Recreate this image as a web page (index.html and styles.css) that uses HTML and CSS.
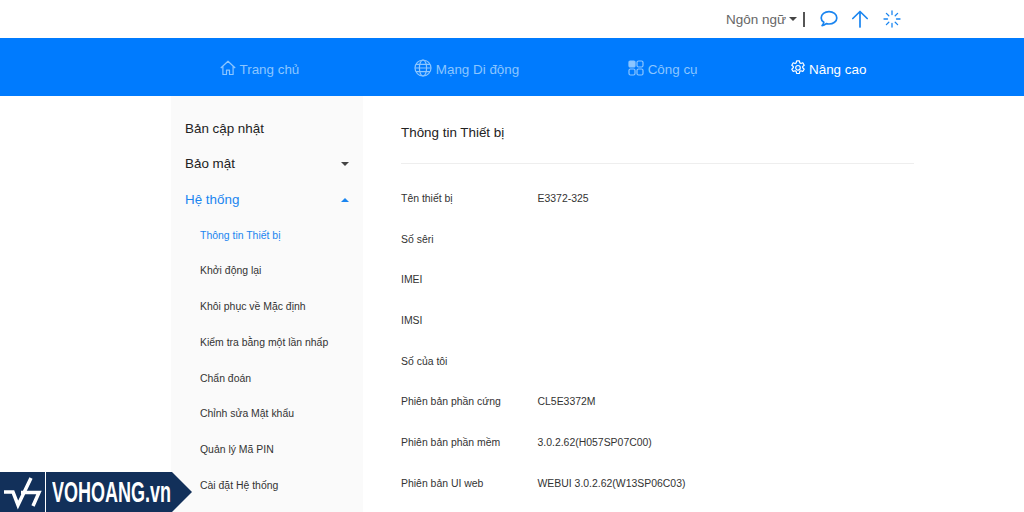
FILE: index.html
```html
<!DOCTYPE html>
<html lang="vi">
<head>
<meta charset="utf-8">
<title>Thông tin Thiết bị</title>
<link rel="stylesheet" href="styles.css">
</head>
<body>
<header class="topbar">
  <div class="lang">Ngôn ngữ<span class="caret down dark"></span></div>
  <span class="divider"></span>
  <svg class="top-icon chat" viewBox="0 0 18 18"><path d="M9 1.700c4.300 0 7.800 2.600 7.800 6.200s-3.500 6.100-7.800 6.100c-1 0-1.900-.1-2.700-.4-1.200 1-2.600 1.800-4.200 2 .9-1 1.500-2.100 1.700-3.300C2.200 11.200 1.200 9.700 1.200 7.900 1.200 4.300 4.700 1.700 9 1.700z"/></svg>
  <svg class="top-icon arrow" viewBox="0 0 18 18"><path d="M9 17V1.500M1.800 8.500 9 1.500l7.200 7"/></svg>
  <svg class="top-icon spin" viewBox="0 0 18 18"><path d="M9 1v3.500M9 13.500V17M1 9h3.500M13.500 9H17M3.400 3.400l2.400 2.400M12.200 12.200l2.400 2.400M14.600 3.400l-2.400 2.400M5.800 12.200l-2.400 2.400"/></svg>
</header>

<nav class="mainnav">
  <a class="navitem w-home">
    <svg class="nav-icon" viewBox="0 0 16 16"><path d="M.8 8 8 1.200 15.200 8M2.900 6.300v8.200h3.600v-4.300h3v4.300h3.600V6.300"/></svg>
    <span>Trang chủ</span>
  </a>
  <a class="navitem w-net">
    <svg class="nav-icon large" viewBox="0 0 18 18"><circle cx="9" cy="9" r="8"/><ellipse cx="9" cy="9" rx="3.600" ry="8"/><path d="M1 9h16M2 5.300h14M2 12.700h14"/></svg>
    <span>Mạng Di động</span>
  </a>
  <a class="navitem w-tool">
    <svg class="nav-icon" viewBox="0 0 16 16"><rect class="solid" x="1" y="1" width="6" height="6" rx="1.200"/><rect x="9" y="1" width="6" height="6" rx="1.500"/><rect x="1" y="9" width="6" height="6" rx="1.500"/><rect x="9" y="9" width="6" height="6" rx="1.500"/></svg>
    <span>Công cụ</span>
  </a>
  <a class="navitem active w-adv">
    <svg class="nav-icon" viewBox="0 0 16 16"><path d="M6.600.9h2.800l.4 2 1.100.6 1.900-.7 1.400 2.400-1.500 1.300v1.300l1.500 1.300-1.400 2.400-1.900-.7-1.100.6-.4 2.100H6.600l-.4-2.100-1.100-.6-1.900.7-1.400-2.400 1.500-1.300V6.500L1.800 5.200l1.400-2.400 1.900.7 1.100-.6z"/><circle cx="8" cy="7.800" r="2.300"/></svg>
    <span>Nâng cao</span>
  </a>
</nav>

<div class="layout">
  <aside class="sidebar">
    <div class="menu-row">Bản cập nhật</div>
    <div class="menu-row">Bảo mật<span class="caret down dark"></span></div>
    <div class="menu-row open">Hệ thống<span class="caret up blue"></span></div>
    <div class="sub-row current">Thông tin Thiết bị</div>
    <div class="sub-row">Khởi động lại</div>
    <div class="sub-row">Khôi phục về Mặc định</div>
    <div class="sub-row">Kiểm tra bằng một lần nhấp</div>
    <div class="sub-row">Chẩn đoán</div>
    <div class="sub-row">Chỉnh sửa Mật khẩu</div>
    <div class="sub-row">Quản lý Mã PIN</div>
    <div class="sub-row">Cài đặt Hệ thống</div>
  </aside>

  <main class="content">
    <h1 class="title">Thông tin Thiết bị</h1>
    <dl class="info">
      <div class="info-row"><dt>Tên thiết bị</dt><dd>E3372-325</dd></div>
      <div class="info-row"><dt>Số sêri</dt><dd></dd></div>
      <div class="info-row"><dt>IMEI</dt><dd></dd></div>
      <div class="info-row"><dt>IMSI</dt><dd></dd></div>
      <div class="info-row"><dt>Số của tôi</dt><dd></dd></div>
      <div class="info-row"><dt>Phiên bản phần cứng</dt><dd>CL5E3372M</dd></div>
      <div class="info-row"><dt>Phiên bản phần mềm</dt><dd>3.0.2.62(H057SP07C00)</dd></div>
      <div class="info-row"><dt>Phiên bản UI web</dt><dd>WEBUI 3.0.2.62(W13SP06C03)</dd></div>
    </dl>
  </main>
</div>

<div class="badge">
  <div class="badge-mark">
    <svg viewBox="0 0 45 40"><path d="M4 20h9l5 13L31 6"/><path d="M21 20.500h18L33 34"/></svg>
  </div>
  <div class="badge-text">VOHOANG.vn</div>
</div>
</body>
</html>
```

FILE: styles.css
```css
* { box-sizing: border-box; }
html, body { margin: 0; height: 512px; overflow: hidden; }
body { background: #fff; font-family: "Liberation Sans", Arial, sans-serif; color: #333; position: relative; }

.topbar { height: 38px; display: flex; align-items: center; padding-left: 726px; }
.lang { font-size: 13.500px; color: #666; display: flex; align-items: center; gap: 3px; }
.divider { width: 1.500px; height: 15px; background: #555; margin: 0 15px 0 6px; }
.top-icon { width: 18px; height: 18px; fill: none; stroke: #1a85f0; stroke-width: 1.700; stroke-linecap: round; stroke-linejoin: round; }
.arrow { margin-left: 13px; }
.spin { margin-left: 14px; stroke-width: 1.300; }

.caret { display: inline-block; width: 0; height: 0; border-left: 4px solid transparent; border-right: 4px solid transparent; }
.caret.down { border-top: 4px solid #444; }
.caret.up { border-bottom: 4px solid #1a85f0; }

.mainnav { height: 58px; background: #007bfe; display: flex; align-items: center; padding-top: 4px; font-size: 13.400px; color: #8cc6ff; }
.navitem { display: flex; align-items: center; gap: 3.500px; }
.navitem.active { color: #fff; }
.w-home { margin-left: 220px; }
.w-net { margin-left: 115px; }
.w-tool { margin-left: 109px; }
.w-adv { margin-left: 92px; }
.nav-icon { width: 16px; height: 16px; fill: none; stroke: currentColor; stroke-width: 1.200; stroke-linejoin: round; margin-top: -3px; }
.nav-icon.large { width: 18px; height: 18px; }
.nav-icon .solid { fill: currentColor; }

.layout { display: flex; align-items: flex-start; padding-left: 171px; }
.sidebar { width: 192px; height: 416px; background: #fafafa; padding-top: 14.400px; flex: none; }
.menu-row { height: 35.700px; display: flex; align-items: center; justify-content: space-between; padding: 0 14px; font-size: 13.400px; color: #222; }
.menu-row.open { color: #1a85f0; }
.sub-row { height: 35.700px; display: flex; align-items: center; padding-left: 29px; font-size: 10.450px; color: #333; }
.sub-row.current { color: #1a85f0; }

.content { width: 513px; margin-left: 38px; }
.title { margin: 0; height: 68px; padding-top: 28px; font-size: 13.400px; line-height: 18px; font-weight: 400; color: #222; border-bottom: 1px solid #eee; }
.info { margin: 14px 0 0; }
.info-row { height: 40.700px; display: flex; align-items: center; font-size: 10.450px; color: #333; }
.info-row dt { width: 136.500px; }
.info-row dd { margin: 0; }

.badge { position: absolute; left: 0; bottom: 0; width: 192px; height: 40px; background: #12305a; display: flex; align-items: center; clip-path: polygon(0 0, 172px 0, 192px 20px, 172px 40px, 0 40px); color: #fff; }
.badge-mark { width: 46px; height: 40px; flex: none; border-right: 1px solid #fff; }
.badge-mark svg { display: block; width: 45px; height: 40px; fill: none; stroke: #fff; stroke-width: 3.500; stroke-linejoin: miter; }
.badge-text { margin-left: 6px; font-weight: 700; font-size: 29px; line-height: 40px; white-space: nowrap; transform: scaleX(.62); transform-origin: left center; }
```
